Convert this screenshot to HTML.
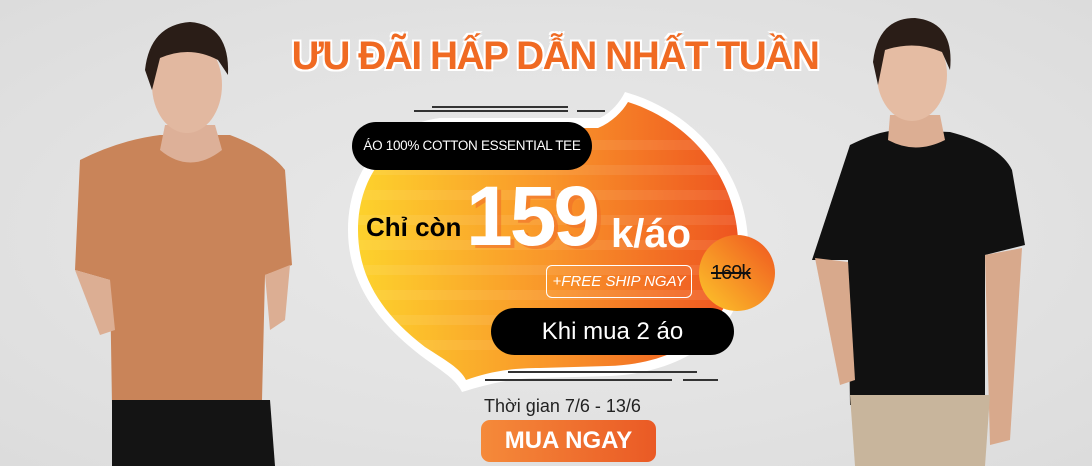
<!DOCTYPE html>
<html><head><meta charset="utf-8"><style>
body{margin:0;width:1092px;height:466px;overflow:hidden;background:#e6e6e6;font-family:"Liberation Sans","Noto Sans CJK SC",sans-serif}
.a{position:absolute;white-space:nowrap}
</style></head><body>
<div class="a" style="left:0;top:0;width:1092px;height:466px;background:radial-gradient(ellipse at 50% 50%,#e9e9e9 0%,#e2e2e2 60%,#dcdcdc 100%)"></div>
<svg class="a" style="left:0;top:0" width="1092" height="466">
<defs>
<linearGradient id="g" x1="0" x2="1"><stop offset="0" stop-color="#fdd22c"/><stop offset="0.5" stop-color="#f9962a"/><stop offset="1" stop-color="#ee5420"/></linearGradient>
<linearGradient id="c" x1="0" x2="1" y1="1" y2="0"><stop offset="0" stop-color="#fdc72a"/><stop offset="1" stop-color="#ef5420"/></linearGradient>
<linearGradient id="b" x1="0" x2="1"><stop offset="0" stop-color="#f58a3a"/><stop offset="1" stop-color="#ea5a25"/></linearGradient>
<clipPath id="cp"><path d="M628 102 C700 125 742 190 738 255 C735 325 683 364 608 366 L540 368 C510 368 488 372 466 380 C460 368 445 360 425 347 C383 315 358 278 358 230 C358 175 392 133 442 128 L598 128 C612 122 622 112 628 102 Z"/></clipPath>
</defs>
<!-- left man -->
<path d="M80 160 Q120 140 160 135 L230 135 Q270 150 285 170 L292 265 L265 275 L262 400 L112 405 L110 280 L75 270 Z" fill="#c98459"/>
<path d="M75 270 L110 280 L115 330 L100 335 Z" fill="#dcae93"/>
<path d="M265 275 L290 265 L285 320 L270 330 Z" fill="#dcae93"/>
<path d="M112 400 L270 400 L275 466 L112 466 Z" fill="#141414"/>
<path d="M165 125 L215 125 L222 150 Q190 175 160 150 Z" fill="#ddb098"/>
<ellipse cx="187" cy="85" rx="35" ry="48" fill="#e2b8a0"/>
<path d="M145 70 Q150 25 190 22 Q230 25 228 75 L218 60 Q190 45 160 58 L152 90 Z" fill="#2a1d17"/>
<!-- right man -->
<path d="M850 145 Q880 130 900 130 L950 132 Q1000 145 1012 170 L1025 245 L985 255 L985 400 L850 405 L848 260 L812 260 Z" fill="#111"/>
<path d="M815 258 L848 262 L855 380 L840 385 Z" fill="#d8a98c"/>
<path d="M985 255 L1022 248 L1010 440 L990 445 Z" fill="#d8a98c"/>
<path d="M850 395 L990 395 L985 466 L855 466 Z" fill="#c8b59c"/>
<path d="M890 115 L940 115 L945 140 Q915 155 888 140 Z" fill="#dcae93"/>
<ellipse cx="912" cy="75" rx="35" ry="46" fill="#e5bca3"/>
<path d="M873 62 Q878 18 915 18 Q955 22 950 70 L942 52 Q915 40 885 50 L878 85 Z" fill="#2a1d17"/>
<!-- blob -->
<path d="M625 92 C705 115 752 185 748 255 C745 330 690 372 610 376 L540 378 C510 378 485 385 462 392 C455 378 440 370 420 355 C375 320 348 280 348 230 C348 170 385 125 440 118 L600 118 C612 112 620 102 625 92 Z" fill="#fff"/>
<path d="M628 102 C700 125 742 190 738 255 C735 325 683 364 608 366 L540 368 C510 368 488 372 466 380 C460 368 445 360 425 347 C383 315 358 278 358 230 C358 175 392 133 442 128 L598 128 C612 122 622 112 628 102 Z" fill="url(#g)"/>
<g fill="#fff" opacity="0.08" clip-path="url(#cp)"><rect x="355" y="140" width="390" height="10"/><rect x="355" y="165" width="390" height="10"/><rect x="355" y="190" width="390" height="10"/><rect x="355" y="215" width="390" height="10"/><rect x="355" y="240" width="390" height="10"/><rect x="355" y="265" width="390" height="10"/><rect x="355" y="290" width="390" height="10"/><rect x="355" y="315" width="390" height="10"/><rect x="355" y="340" width="390" height="10"/></g>
<!-- lines -->
<g stroke="#333" stroke-width="2"><line x1="432" y1="107" x2="568" y2="107"/><line x1="414" y1="111" x2="568" y2="111"/><line x1="577" y1="111" x2="605" y2="111"/>
<line x1="508" y1="372" x2="697" y2="372"/><line x1="485" y1="380" x2="672" y2="380"/><line x1="683" y1="380" x2="718" y2="380"/></g>
<circle cx="737" cy="273" r="38" fill="url(#c)"/>
<rect x="481" y="420" width="175" height="42" rx="9" fill="url(#b)"/>
</svg>
<div class="a" style="left:270px;top:34px;width:570px;text-align:center;font-size:40px;font-weight:bold;color:#f06a22;letter-spacing:-1.5px;transform:scaleX(0.97);text-shadow:2px 2px 0 #fff,-2px -2px 0 #fff,2px -2px 0 #fff,-2px 2px 0 #fff">ƯU ĐÃI HẤP DẪN NHẤT TUẦN</div>
<div class="a" style="left:352px;top:122px;width:240px;height:48px;border-radius:24px;background:#000;color:#fff;font-size:13.5px;line-height:48px;text-align:center;letter-spacing:-0.3px">ÁO 100% COTTON ESSENTIAL TEE</div>
<div class="a" style="left:366px;top:212px;font-size:26px;font-weight:bold;color:#000">Chỉ còn</div>
<div class="a" style="left:466px;top:168px;font-size:84px;font-weight:bold;color:#fff;letter-spacing:-3px;text-shadow:4px 3px 0 rgba(240,110,40,.6)">159</div>
<div class="a" style="left:611px;top:212px;font-size:40px;font-weight:bold;color:#fff">k/áo</div>
<div class="a" style="left:546px;top:265px;width:144px;height:31px;border:1.5px solid #fff;border-radius:6px;color:#fff;font-style:italic;font-size:15px;line-height:31px;text-align:center">+FREE SHIP NGAY</div>
<div class="a" style="left:711px;top:262px;font-size:20px;color:#111;text-decoration:line-through;letter-spacing:-1px">169k</div>
<div class="a" style="left:491px;top:308px;width:243px;height:47px;border-radius:24px;background:#000;color:#fff;font-size:24px;line-height:47px;text-align:center">Khi mua 2 áo</div>
<div class="a" style="left:484px;top:396px;font-size:18px;color:#222">Thời gian 7/6 - 13/6</div>
<div class="a" style="left:481px;top:420px;width:175px;height:42px;color:#fff;font-size:24px;font-weight:bold;line-height:42px;text-align:center">MUA NGAY</div>
</body></html>
